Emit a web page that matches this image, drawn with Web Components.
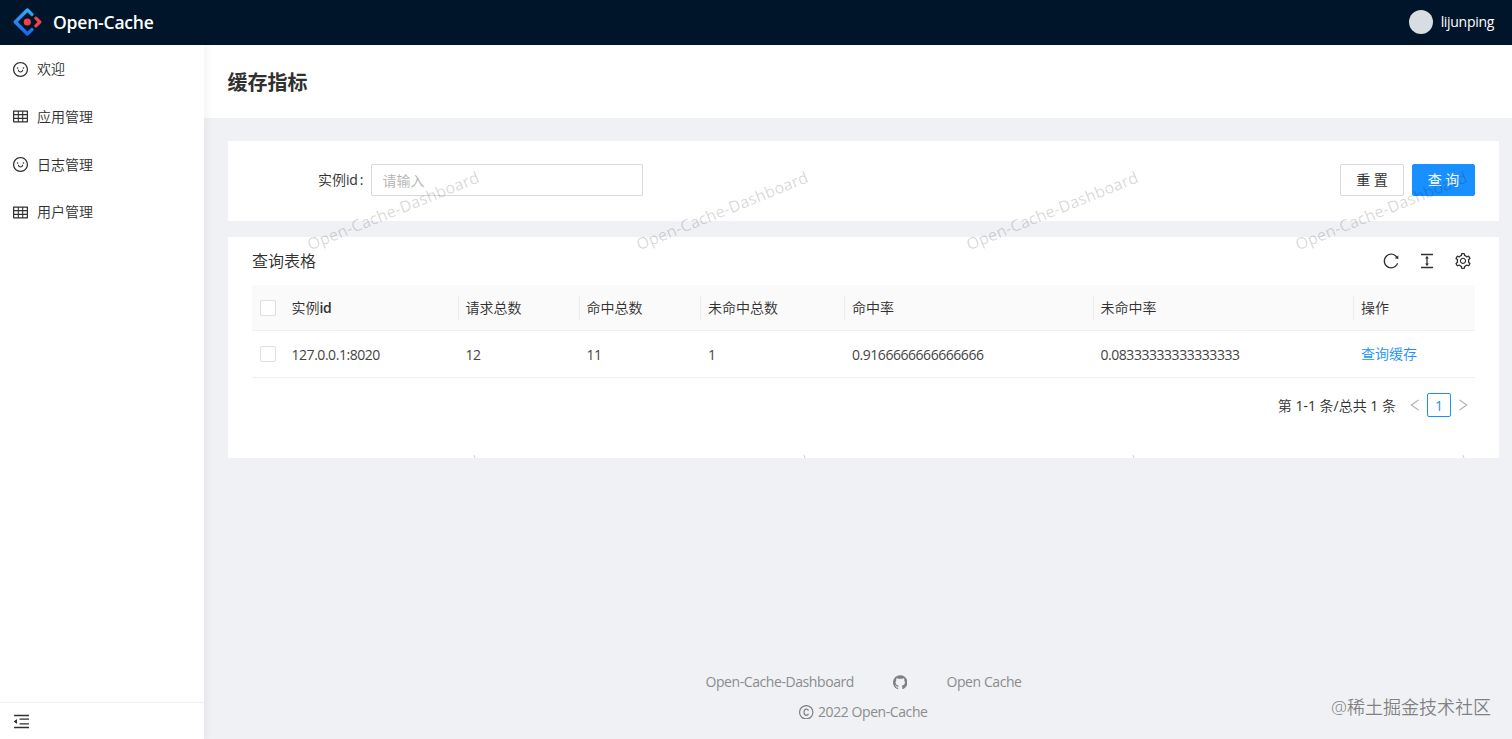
<!DOCTYPE html>
<html lang="zh-CN">
<head>
<meta charset="utf-8">
<title>Open-Cache</title>
<style>
    html, body {
        height: 100%;
        margin: 0;
    }

    body {
        font: 350 14px/22px "Open Sans", "Noto Sans CJK SC", sans-serif;
        color: #303030;
        background: #eff1f5;
        overflow: hidden;
    }
</style>
</head>
<body>
<oc-app></oc-app>

<script>
const ICONS = {
    smile: 'M288 421a48 48 0 1096 0 48 48 0 10-96 0zm352 0a48 48 0 1096 0 48 48 0 10-96 0zM512 64C264.6 64 64 264.6 64 512s200.6 448 448 448 448-200.6 448-448S759.4 64 512 64zm263 711c-34.2 34.2-74 61-118.3 79.8C611 874.2 562.3 884 512 884c-50.3 0-99-9.8-144.8-29.2A370.4 370.4 0 01248.9 775c-34.2-34.2-61-74-79.8-118.3C149.8 611 140 562.3 140 512s9.8-99 29.2-144.8A370.4 370.4 0 01249 248.9c34.2-34.2 74-61 118.3-79.8C413 149.8 461.7 140 512 140c50.3 0 99 9.8 144.8 29.2A370.4 370.4 0 01775.1 249c34.2 34.2 61 74 79.8 118.3C874.2 413 884 461.7 884 512s-9.8 99-29.2 144.8A368.89 368.89 0 01775 775zM664 533h-48.1c-4.2 0-7.8 3.2-8.1 7.4C604 589.9 562.5 629 512 629s-92.1-39.1-95.8-88.6c-.3-4.2-3.9-7.4-8.1-7.4H360a8 8 0 00-8 8.4c4.4 84.3 74.5 151.6 160 151.6s155.6-67.3 160-151.6a8 8 0 00-8-8.4z',
    table: 'M928 160H96c-17.7 0-32 14.3-32 32v640c0 17.7 14.3 32 32 32h832c17.7 0 32-14.3 32-32V192c0-17.7-14.3-32-32-32zm-40 208H676V232h212v136zm0 224H676V432h212v160zM412 432h200v160H412V432zm200-64H412V232h200v136zm-476 64h212v160H136V432zm0-200h212v136H136V232zm0 424h212v136H136V656zm276 0h200v136H412V656zm476 136H676V656h212v136z',
    fold: 'M120 158h784v72H120zM408 352h496v72H408zM408 600h496v72H408zM120 794h784v72H120zM115 519l142 112c6 5 15 1 15-7V400c0-8-9-12-15-7L115 505c-5 4-5 10 0 14z',
    reload: 'M909.1 209.3l-56.4 44.1C775.8 155.1 656.2 92 521.9 92 290 92 102.3 279.5 102 511.5 101.7 743.7 289.8 932 521.9 932c181.3 0 335.8-115 394.6-276.1 1.5-4.2-.7-8.9-4.9-10.3l-56.7-19.5a8 8 0 00-10.1 4.8c-1.8 5-3.8 10-5.9 14.9-17.3 41-42.1 77.8-73.7 109.4A344.77 344.77 0 01655.9 829c-42.3 17.9-87.4 27-133.8 27-46.5 0-91.5-9.1-133.8-27A341.5 341.5 0 01279 755.2a342.16 342.16 0 01-73.7-109.4c-17.9-42.4-27-87.4-27-133.9s9.1-91.5 27-133.9c17.3-41 42.1-77.8 73.7-109.4 31.6-31.6 68.4-56.4 109.3-73.8 42.3-17.9 87.4-27 133.8-27 46.5 0 91.5 9.1 133.8 27a341.5 341.5 0 01109.3 73.8c9.9 9.9 19.2 20.4 27.8 31.4l-60.2 47a8 8 0 003 14.1l175.6 43c5 1.2 9.9-2.6 9.9-7.7l.8-180.9c-.1-6.6-7.8-10.3-13-6.2z',
    height: 'M840 836H184c-4.4 0-8 3.6-8 8v60c0 4.4 3.6 8 8 8h656c4.4 0 8-3.6 8-8v-60c0-4.4-3.6-8-8-8zm0-724H184c-4.4 0-8 3.6-8 8v60c0 4.4 3.6 8 8 8h656c4.4 0 8-3.6 8-8v-60c0-4.4-3.6-8-8-8zM610.8 378c6 0 9.4-7 5.7-11.7L515.7 238.7a7.14 7.14 0 00-11.3 0L403.6 366.3a7.23 7.23 0 005.7 11.7H476v268h-62.8c-6 0-9.4 7-5.7 11.7l100.8 127.5c2.9 3.7 8.5 3.7 11.3 0l100.8-127.5c3.7-4.7.4-11.7-5.7-11.7H548V378h62.8z',
    setting: 'M924.8 625.7l-65.5-56c3.1-19 4.7-38.4 4.7-57.8s-1.6-38.8-4.7-57.8l65.5-56a32.03 32.03 0 009.3-35.2l-.9-2.6a443.74 443.74 0 00-79.7-137.9l-1.8-2.1a32.12 32.12 0 00-35.1-9.5l-81.3 28.9c-30-24.6-63.5-44-99.7-57.6l-15.7-85a32.05 32.05 0 00-25.8-25.7l-2.7-.5c-52.1-9.4-106.9-9.4-159 0l-2.7.5a32.05 32.05 0 00-25.8 25.7l-15.8 85.4a351.86 351.86 0 00-99 57.4l-81.9-29.1a32 32 0 00-35.1 9.5l-1.8 2.1a446.02 446.02 0 00-79.7 137.9l-.9 2.6c-4.5 12.5-.8 26.5 9.3 35.2l66.3 56.6c-3.1 18.8-4.6 38-4.6 57.1 0 19.2 1.5 38.4 4.6 57.1L99 625.5a32.03 32.03 0 00-9.3 35.2l.9 2.6c18.1 50.4 44.9 96.9 79.7 137.9l1.8 2.1a32.12 32.12 0 0035.1 9.5l81.9-29.1c29.8 24.5 63.1 43.9 99 57.4l15.8 85.4a32.05 32.05 0 0025.8 25.7l2.7.5a449.4 449.4 0 00159 0l2.7-.5a32.05 32.05 0 0025.8-25.7l15.7-85a350 350 0 0099.7-57.6l81.3 28.9a32 32 0 0035.1-9.5l1.8-2.1c34.8-41.1 61.6-87.5 79.7-137.9l.9-2.6c4.5-12.3.8-26.3-9.3-35zM788.3 465.9c2.5 15.1 3.8 30.6 3.8 46.1s-1.3 31-3.8 46.1l-6.6 40.1 74.7 63.9a370.03 370.03 0 01-42.6 73.6L721 702.8l-31.4 25.8c-23.9 19.6-50.5 35-79.3 45.8l-38.1 14.3-17.9 97a377.5 377.5 0 01-85 0l-17.9-97.2-37.8-14.5c-28.5-10.8-55-26.2-78.7-45.7l-31.4-25.9-93.4 33.2c-17-22.9-31.2-47.6-42.6-73.6l75.5-64.5-6.5-40c-2.4-14.9-3.7-30.3-3.7-45.5 0-15.3 1.2-30.6 3.7-45.5l6.5-40-75.5-64.5c11.3-26.1 25.6-50.7 42.6-73.6l93.4 33.2 31.4-25.9c23.7-19.5 50.2-34.9 78.7-45.7l37.9-14.3 17.9-97.2c28.1-3.2 56.8-3.2 85 0l17.9 97 38.1 14.3c28.7 10.8 55.4 26.2 79.3 45.8l31.4 25.8 92.8-32.9c17 22.9 31.2 47.6 42.6 73.6L781.8 426l6.5 39.9zM512 326c-97.2 0-176 78.8-176 176s78.8 176 176 176 176-78.8 176-176-78.8-176-176-176zm79.2 255.2A111.6 111.6 0 01512 614c-29.9 0-58-11.7-79.2-32.8A111.6 111.6 0 01400 502c0-29.9 11.7-58 32.8-79.2C454 401.6 482.1 390 512 390c29.9 0 58 11.6 79.2 32.8A111.6 111.6 0 01624 502c0 29.9-11.7 58-32.8 79.2z',
    github: 'M511.6 76.3C264.3 76.2 64 276.4 64 523.5 64 718.9 189.3 885 363.8 946c23.5 5.9 19.9-10.8 19.9-22.2v-77.5c-135.7 15.9-141.2-73.9-150.3-88.9C215 726 171.5 718 184.5 703c30.9-15.9 62.4 4 98.9 57.9 26.4 39.1 77.9 32.5 104 26 5.7-23.5 17.9-44.5 34.7-60.8-140.6-25.2-199.2-111-199.2-213 0-49.5 16.3-95 48.3-131.7-20.4-60.5 1.9-112.3 4.9-120 58.1-5.2 118.5 41.6 123.2 45.3 33-8.9 70.7-13.6 112.9-13.6 42.4 0 80.2 4.9 113.5 13.9 11.3-8.6 67.3-48.8 121.3-43.9 2.9 7.7 24.7 58.3 5.5 118 32.4 36.8 48.9 82.7 48.9 132.3 0 102.2-59 188.1-200 212.9a127.5 127.5 0 0138.1 91v112.5c.8 9 0 17.9 15 17.9 177.1-59.7 304.6-227 304.6-424.1 0-247.2-200.4-447.3-447.5-447.3z'
};

// outlines that are simpler as strokes
const STROKES = {
    left: '<path d="M780 130L230 512l550 382"/>',
    right: '<path d="M244 130l550 382-550 382"/>',
    copyright: '<circle cx="512" cy="512" r="412"/><path d="M650 420c-20-65-65-98-130-98-90 0-145 70-145 190s55 190 145 190c65 0 110-33 130-98"/>'
};

class BaseElement extends HTMLElement {
    constructor() {
        super();
        this.attachShadow({mode: 'open'});
    }

    connectedCallback() {
        let template = document.createElement('template');
        template.innerHTML = this.getTemplateString();
        this.shadowRoot.replaceChildren(document.importNode(template.content, true));
    }
}

class OcIcon extends BaseElement {
    getTemplateString() {
        let name = this.getAttribute('name');
        let shape = ICONS[name]
            ? `<path fill="currentColor" d="${ICONS[name]}"/>`
            : `<g fill="none" stroke="currentColor" stroke-width="76">${STROKES[name]}</g>`;
        return `
            <style>
                :host {
                    display: inline-flex;
                    flex: none;
                    width: 1em;
                    height: 1em;
                }

                svg {
                    width: 100%;
                    height: 100%;
                }
            </style>
            <svg viewBox="64 64 896 896">${shape}</svg>
        `;
    }
}

class OcHeader extends BaseElement {
    getTemplateString() {
        return `
            <style>
                :host {
                    display: flex;
                    align-items: center;
                    height: 45px;
                    box-sizing: border-box;
                    padding: 0 18px 1px 13px;
                    color: #fff;
                    background: #001529;
                }

                .logo {
                    width: 29px;
                    height: 28px;
                }

                h1 {
                    flex: 1;
                    margin: 0 0 0 11px;
                    font-size: 17.5px;
                    font-weight: 600;
                    letter-spacing: -0.2px;
                }

                .avatar {
                    width: 24px;
                    height: 24px;
                    margin-right: 8px;
                    border-radius: 50%;
                    background: #d7dde1;
                }

                .user {
                    font-size: 14px;
                    font-weight: 400;
                    letter-spacing: -0.3px;
                }
            </style>
            <svg class="logo" viewBox="0 0 29 28" fill="none" stroke-linecap="round" stroke-linejoin="round">
                <defs>
                    <linearGradient id="blue" x1="0" y1="0" x2="0" y2="1">
                        <stop offset="0" stop-color="#35a9f5"/>
                        <stop offset="1" stop-color="#1769f0"/>
                    </linearGradient>
                </defs>
                <path stroke="url(#blue)" stroke-width="3.4" d="M18.9 6.4L14.4 2 2.3 14l12.1 12 4.5-4.4"/>
                <path stroke="#f0434f" stroke-width="3.2" d="M22.9 10.2l3.9 3.8-3.9 3.8"/>
                <circle cx="14.3" cy="14" r="3.6" fill="#f2404d"/>
            </svg>
            <h1>Open-Cache</h1>
            <span class="avatar"></span>
            <span class="user">lijunping</span>
        `;
    }
}

class OcMenuItem extends BaseElement {
    getTemplateString() {
        return `
            <style>
                :host {
                    display: flex;
                    align-items: center;
                    gap: 9px;
                    height: 47.6px;
                    padding-left: 13px;
                }

                oc-icon {
                    font-size: 15px;
                }
            </style>
            <oc-icon name="${this.getAttribute('icon')}"></oc-icon>
            <slot></slot>
        `;
    }
}

class OcSider extends BaseElement {
    getTemplateString() {
        return `
            <style>
                :host {
                    display: flex;
                    flex-direction: column;
                    width: 204px;
                    flex: none;
                    background: #fff;
                    box-shadow: 2px 0 8px rgba(29, 35, 41, .06);
                    z-index: 1;
                }

                nav {
                    flex: 1;
                    padding-top: 0.6px;
                }

                footer {
                    display: flex;
                    align-items: center;
                    height: 36px;
                    padding-left: 13px;
                    border-top: 1px solid #f0f0f0;
                }

                footer oc-icon {
                    font-size: 17px;
                }
            </style>
            <nav>
                <oc-menu-item icon="smile">欢迎</oc-menu-item>
                <oc-menu-item icon="table">应用管理</oc-menu-item>
                <oc-menu-item icon="smile">日志管理</oc-menu-item>
                <oc-menu-item icon="table">用户管理</oc-menu-item>
            </nav>
            <footer><oc-icon name="fold"></oc-icon></footer>
        `;
    }
}

class OcButton extends BaseElement {
    getTemplateString() {
        return `
            <style>
                :host {
                    display: block;
                }

                button {
                    display: block;
                    width: 64px;
                    height: 32px;
                    padding: 0;
                    font: inherit;
                    font-weight: 400;
                    color: #333;
                    background: #fff;
                    border: 1px solid #d9d9d9;
                    border-radius: 2px;
                }

                :host([primary]) button {
                    width: 63px;
                    color: #fff;
                    background: #1890ff;
                    border-color: #1890ff;
                }
            </style>
            <button><slot></slot></button>
        `;
    }
}

class OcSearch extends BaseElement {
    getTemplateString() {
        return `
            <style>
                :host {
                    display: flex;
                    align-items: center;
                    height: 80px;
                    box-sizing: border-box;
                    padding: 0 24px 2px 90px;
                    background: #fff;
                }

                label {
                    width: 53px;
                    white-space: nowrap;
                }

                .latin {
                    font-weight: 400;
                    letter-spacing: -0.2px;
                }

                .colon {
                    margin-left: 2px;
                }

                input {
                    box-sizing: border-box;
                    width: 272px;
                    height: 32px;
                    padding: 0 10.5px;
                    font: inherit;
                    border: 1px solid #d9d9d9;
                    border-radius: 2px;
                    outline: none;
                }

                input::placeholder {
                    color: #b3b3b3;
                }

                .actions {
                    display: flex;
                    gap: 8px;
                    margin-left: auto;
                }
            </style>
            <label>实例<span class="latin">id<span class="colon">:</span></span></label>
            <input placeholder="请输入">
            <div class="actions">
                <oc-button>重 置</oc-button>
                <oc-button primary>查 询</oc-button>
            </div>
        `;
    }
}

class OcTable extends BaseElement {
    getTemplateString() {
        let titles = ['实例<b>id</b>', '请求总数', '命中总数', '未命中总数', '命中率', '未命中率', '操作'];
        let row = ['127.0.0.1:8020', '12', '11', '1', '0.9166666666666666', '0.08333333333333333'];
        return `
            <style>
                :host {
                    display: block;
                    height: 221px;
                    box-sizing: border-box;
                    padding: 0 24px 0 24px;
                    background: #fff;
                }

                .toolbar {
                    display: flex;
                    align-items: center;
                    height: 48px;
                }

                h2 {
                    flex: 1;
                    margin: 0;
                    font-size: 16px;
                    font-weight: 350;
                }

                .tools {
                    display: flex;
                    gap: 20px;
                    padding-right: 4px;
                    font-size: 16px;
                }

                .row {
                    display: grid;
                    grid-template-columns: 31.5px 174px 121px 121.5px 144px 248.5px 260.5px 1fr;
                    align-items: center;
                    height: 46px;
                    border-bottom: 1px solid #f0f0f0;
                }

                .row.head {
                    height: 45px;
                    background: #fafafa;
                }

                .row > * {
                    padding-left: 8px;
                }

                .head > * + * + * {
                    line-height: 24px;
                    padding-left: 7px;
                    border-left: 1px solid #ececec;
                }

                .head b {
                    font-weight: 600;
                    letter-spacing: -0.4px;
                }

                .num {
                    padding-top: 1px;
                    font-weight: 400;
                    letter-spacing: -0.46px;
                    color: #444;
                }

                .box {
                    display: block;
                    width: 14px;
                    height: 14px;
                    background: #fff;
                    border: 1px solid #dedede;
                    border-radius: 2px;
                }

                a {
                    color: #1890ff;
                }

                .pager {
                    display: flex;
                    justify-content: flex-end;
                    align-items: center;
                    padding: 15px 6px 0 0;
                }

                .total {
                    margin: 1px 13px 0 0;
                }

                .total span {
                    font-weight: 400;
                }

                .pager oc-icon {
                    font-size: 12px;
                    color: #aaa;
                }

                .page {
                    width: 22px;
                    height: 22px;
                    margin: 0 6px;
                    line-height: 23px;
                    text-align: center;
                    font-weight: 400;
                    color: #1890ff;
                    border: 1px solid #1890ff;
                    border-radius: 2px;
                }
            </style>
            <div class="toolbar">
                <h2>查询表格</h2>
                <div class="tools">
                    <oc-icon name="reload"></oc-icon>
                    <oc-icon name="height"></oc-icon>
                    <oc-icon name="setting"></oc-icon>
                </div>
            </div>
            <div class="row head">
                <div><span class="box"></span></div>
                ${titles.map(t => `<div>${t}</div>`).join('')}
            </div>
            <div class="row">
                <div><span class="box"></span></div>
                ${row.map(v => `<div class="num">${v}</div>`).join('')}
                <div><a>查询缓存</a></div>
            </div>
            <div class="pager">
                <div class="total">第 <span>1-1</span> 条<span>/</span>总共 <span>1</span> 条</div>
                <oc-icon name="left"></oc-icon>
                <span class="page">1</span>
                <oc-icon name="right"></oc-icon>
            </div>
        `;
    }
}

// repeats its text attribute over the slotted content
class OcWatermark extends BaseElement {
    getTemplateString() {
        let marks = '';
        for (let i = 0; i < 4; i++) {
            marks += `<span style="left: ${79.5 + i * 329.5}px">${this.getAttribute('text')}</span>`;
            // tip of the next line of marks, just above the lower edge
            marks += `<i style="left: ${246 + i * 329.5}px"></i>`;
        }
        return `
            <style>
                :host {
                    display: block;
                    position: relative;
                }

                .layer {
                    position: absolute;
                    inset: 0;
                    overflow: hidden;
                    pointer-events: none;
                }

                span {
                    position: absolute;
                    top: 94px;
                    font-size: 16px;
                    line-height: 20px;
                    letter-spacing: 0.22px;
                    white-space: nowrap;
                    font-weight: 400;
                    color: rgba(0, 0, 0, .17);
                    transform: rotate(-22deg);
                    transform-origin: 0 50%;
                }

                i {
                    position: absolute;
                    bottom: 0;
                    width: 1px;
                    height: 3px;
                    background: rgba(0, 0, 0, .2);
                    transform: rotate(-22deg);
                }
            </style>
            <slot></slot>
            <div class="layer">${marks}</div>
        `;
    }
}

class OcFooter extends BaseElement {
    getTemplateString() {
        return `
            <style>
                :host {
                    display: block;
                    padding: 0 0 16px 11px;
                    color: #8c8c8c;
                    font-weight: 400;
                    letter-spacing: -0.42px;
                }

                .links, .copy {
                    display: flex;
                    justify-content: center;
                    align-items: center;
                }

                .links {
                    gap: 39px;
                    margin-bottom: 8px;
                }

                .copy {
                    gap: 4px;
                }

                oc-icon {
                    font-size: 14.5px;
                    color: #808080;
                }
            </style>
            <div class="links">
                <span>Open-Cache-Dashboard</span>
                <oc-icon name="github"></oc-icon>
                <span>Open Cache</span>
            </div>
            <div class="copy"><oc-icon name="copyright"></oc-icon><span>2022 Open-Cache</span></div>
        `;
    }
}

class OcApp extends BaseElement {
    getTemplateString() {
        return `
            <style>
                :host {
                    display: flex;
                    flex-direction: column;
                    height: 100vh;
                }

                .body {
                    display: flex;
                    flex: 1;
                    min-height: 0;
                }

                main {
                    display: flex;
                    flex-direction: column;
                    flex: 1;
                }

                .title {
                    height: 73px;
                    box-sizing: border-box;
                    padding: 22px 24px 20px 23.5px;
                    background: #fff;
                }

                .title h1 {
                    margin: 0;
                    font-size: 20px;
                    line-height: 32px;
                    font-weight: 600;
                }

                oc-watermark {
                    margin: 23px 13px auto 24px;
                }

                oc-table {
                    margin-top: 16px;
                }

                .credit {
                    position: absolute;
                    right: 21px;
                    bottom: 21px;
                    font-size: 18px;
                    color: #808080;
                    text-shadow: 0 0 1px #fff;
                }
            </style>
            <oc-header></oc-header>
            <div class="body">
                <oc-sider></oc-sider>
                <main>
                    <div class="title"><h1>缓存指标</h1></div>
                    <oc-watermark text="Open-Cache-Dashboard">
                        <oc-search></oc-search>
                        <oc-table></oc-table>
                    </oc-watermark>
                    <oc-footer></oc-footer>
                </main>
            </div>
            <div class="credit">@稀土掘金技术社区</div>
        `;
    }
}

customElements.define('oc-icon', OcIcon);
customElements.define('oc-header', OcHeader);
customElements.define('oc-menu-item', OcMenuItem);
customElements.define('oc-sider', OcSider);
customElements.define('oc-button', OcButton);
customElements.define('oc-search', OcSearch);
customElements.define('oc-table', OcTable);
customElements.define('oc-watermark', OcWatermark);
customElements.define('oc-footer', OcFooter);
customElements.define('oc-app', OcApp);
</script>
</body>
</html>
